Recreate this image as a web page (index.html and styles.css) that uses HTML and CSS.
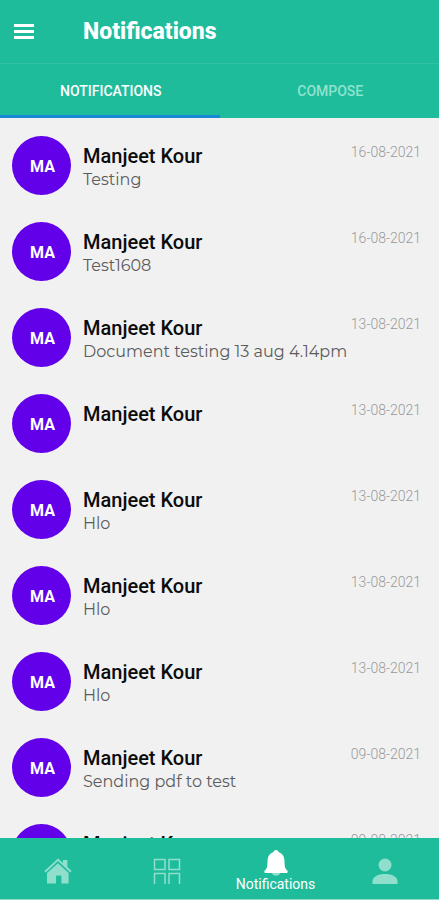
FILE: index.html
```html
<!DOCTYPE html>
<html lang="en">
<head>
    <meta charset="UTF-8">
    <meta name="viewport" content="width=device-width, initial-scale=1">
    <title>Notifications</title>
    <link rel="stylesheet" href="styles.css">
</head>
<body>
    <header class="app-bar">
        <button class="menu-btn" type="button" aria-label="Open menu">
            <svg width="20" height="16" viewBox="0 0 20 16">
                <path d="M0 1.500h20M0 7.500h20M0 13.500h20" stroke="#fff" stroke-width="2.800"/>
            </svg>
        </button>
        <h1 class="app-title">Notifications</h1>
    </header>

    <nav class="tabs">
        <button class="tab active" type="button">NOTIFICATIONS</button>
        <button class="tab" type="button">COMPOSE</button>
    </nav>

    <main class="list" id="list"></main>

    <nav class="bottom-nav">
        <a class="nav-item" href="#home" aria-label="Home">
            <svg width="28" height="26" viewBox="0 0 28 26" fill="currentColor">
                <path d="M14 .4L19 5V2h4.400v7L27.600 13l-1.300 1.400L14 3.100 1.700 14.400.4 13z"/>
                <path d="M14 5.200l10.600 9.700V25.400h-7.200V18.400q0-1-1-1h-3.400q-1 0-1 1v7H3V14.900z"/>
            </svg>
        </a>
        <a class="nav-item" href="#dashboard" aria-label="Dashboard">
            <svg width="28" height="26" viewBox="0 0 28 26" fill="none" stroke="currentColor" stroke-width="1.500">
                <path d="M1.500 1.500h10.500v10H1.500zM16 1.500h10.500v10H16zM1.500 26V15.500H12V26M16 26V15.500h10.500V26"/>
            </svg>
        </a>
        <a class="nav-item active" href="#notifications">
            <svg width="24" height="26" viewBox="0 0 24 26" fill="currentColor">
                <path d="M12 0c1.400 0 2.300.8 2.500 2.100 3.700 1.100 5.700 4 5.900 8l.3 5.400c.1 2.200 1 3.600 2.500 5 .9.900.5 2.500-.9 2.500H1.700c-1.400 0-1.800-1.600-.9-2.500 1.500-1.400 2.400-2.800 2.500-5l.3-5.400c.2-4 2.200-6.900 5.900-8C9.700.8 10.600 0 12 0z"/>
                <path d="M8 23h8c-.4 3.600-7.600 3.600-8 0z" opacity=".5"/>
            </svg>
            <span class="nav-label">Notifications</span>
        </a>
        <a class="nav-item" href="#profile" aria-label="Profile">
            <svg width="26" height="26" viewBox="0 0 26 26" fill="currentColor">
                <circle cx="13" cy="7" r="6.500"/>
                <path d="M.5 26v-2.500C.5 18.500 6 16 13 16s12.500 2.500 12.500 7.500V26z"/>
            </svg>
        </a>
    </nav>

    <script>
        const notifications = [
            { name: 'Manjeet Kour', message: 'Testing', date: '16-08-2021' },
            { name: 'Manjeet Kour', message: 'Test1608', date: '16-08-2021' },
            { name: 'Manjeet Kour', message: 'Document testing 13 aug 4.14pm', date: '13-08-2021' },
            { name: 'Manjeet Kour', message: '', date: '13-08-2021' },
            { name: 'Manjeet Kour', message: 'Hlo', date: '13-08-2021' },
            { name: 'Manjeet Kour', message: 'Hlo', date: '13-08-2021' },
            { name: 'Manjeet Kour', message: 'Hlo', date: '13-08-2021' },
            { name: 'Manjeet Kour', message: 'Sending pdf to test', date: '09-08-2021' },
            { name: 'Manjeet Kour', message: '', date: '09-08-2021' }
        ];

        document.getElementById('list').innerHTML = notifications
            .map(n => `
                <article class="item">
                    <div class="avatar">${n.name.slice(0, 2).toUpperCase()}</div>
                    <div class="item-info">
                        <div class="item-head">
                            <h2 class="item-name">${n.name}</h2>
                            <time class="item-date">${n.date}</time>
                        </div>
                        <p class="item-message">${n.message}</p>
                    </div>
                </article>
            `).join('');
    </script>
</body>
</html>
```
FILE: styles.css
```css
* {
    margin: 0;
    padding: 0;
    box-sizing: border-box;
}

body {
    height: 100vh;
    display: flex;
    flex-direction: column;
    font-family: Roboto, sans-serif;
    background: #f1f1f1;
    color: #0c0c0c;
}

button {
    border: none;
    background: none;
    font-family: inherit;
    cursor: pointer;
}

.app-bar {
    display: flex;
    align-items: center;
    flex-shrink: 0;
    height: 64px;
    padding: 0 14px;
    gap: 49px;
    background: #1fbc9c;
    border-bottom: 1px solid #2fc2a4;
}

.menu-btn {
    display: flex;
    width: 20px;
}

.app-title {
    font-size: 23px;
    font-weight: 800;
    color: #fff;
}

.tabs {
    display: flex;
    flex-shrink: 0;
    height: 54px;
    background: #1fbc9c;
}

.tab {
    flex: 1;
    padding: 2px 0 0 2px;
    font-size: 14px;
    font-weight: 500;
    color: #8fe3cf;
    border-bottom: 3px solid transparent;
}

.tab.active {
    color: #fff;
    border-bottom-color: #1787d8;
}

.list {
    flex: 1;
    min-height: 0;
    padding-top: 5px;
    overflow-y: auto;
    scrollbar-width: none;
}

.item {
    display: flex;
    gap: 12px;
    min-height: 86px;
    padding: 13px 18px 0 12px;
}

.avatar {
    display: flex;
    align-items: center;
    justify-content: center;
    flex-shrink: 0;
    width: 59px;
    height: 59px;
    padding: 2px 0 0 2px;
    border-radius: 50%;
    background: #6200ea;
    color: #fff;
    font-size: 16px;
    font-weight: 700;
}

.item-info {
    flex: 1;
    padding-top: 8px;
}

.item-head {
    display: flex;
    justify-content: space-between;
}

.item-name {
    font-size: 20px;
    line-height: 24px;
    font-weight: 500;
}

.item-message {
    font-family: Montserrat, Inter, sans-serif;
    font-size: 16px;
    line-height: 24px;
    color: #5c5c5c;
}

.item-date {
    font-size: 14px;
    line-height: 16px;
    font-weight: 300;
    color: #999;
}

.bottom-nav {
    display: flex;
    flex-shrink: 0;
    height: 62px;
    padding-left: 3px;
    background: #1fbc9c;
    border-bottom: 1px solid #8fdccb;
}

.nav-item {
    flex: 1;
    display: flex;
    flex-direction: column;
    align-items: center;
    justify-content: center;
    padding-top: 4px;
    color: #8fdfcc;
    text-decoration: none;
}

.nav-item.active {
    color: #fff;
}

.nav-label {
    font-size: 14px;
    line-height: 16px;
}
```
